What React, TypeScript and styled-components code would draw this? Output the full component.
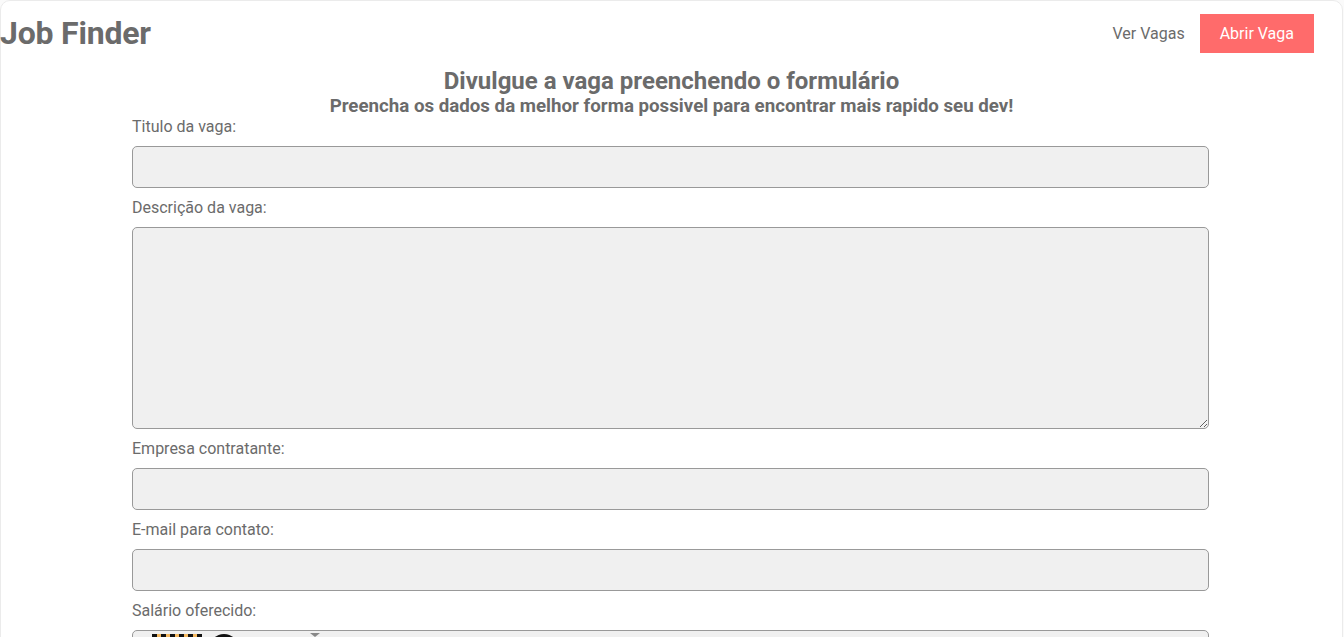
import React from "react";
import styled, { createGlobalStyle } from "styled-components";

const GlobalStyle = createGlobalStyle`
  * { box-sizing: border-box; }
  html, body { margin: 0; padding: 0; background: #fafafa; }
  body { font-family: Roboto, "Liberation Sans", Arial, sans-serif; color: #6b6b6b; }
`;

const Page = styled.div`
  width: 1343px;
  background: #ffffff;
  border: 1px solid #ebebeb;
  border-radius: 10px;
  min-height: 900px;
`;

const Header = styled.header`
  display: flex;
  align-items: center;
  justify-content: space-between;
  padding: 13px 28px 14px 0;
`;

const Logo = styled.h1`
  margin: 0 0 0 -1px;
  font-size: 32px;
  font-weight: 700;
  color: #6b6b6b;
  line-height: 37.5px;
  letter-spacing: -0.2px;
`;

const Nav = styled.nav`
  display: flex;
  align-items: center;
  gap: 15px;
`;

const NavLink = styled.a<{ $primary?: boolean }>`
  font-size: 16px;
  line-height: 19px;
  text-decoration: none;
  cursor: pointer;
  color: ${(p) => (p.$primary ? "#ffffff" : "#6b6b6b")};
  background: ${(p) => (p.$primary ? "#ff6b6b" : "transparent")};
  padding: ${(p) => (p.$primary ? "10px 20px" : "0")};
`;

const Intro = styled.section`
  text-align: center;
`;

const Title = styled.h2`
  margin: 0;
  font-size: 24px;
  line-height: 28px;
  font-weight: 700;
  color: #6b6b6b;
`;

const Subtitle = styled.h3`
  margin: 0;
  font-size: 18.72px;
  line-height: 22px;
  font-weight: 700;
  color: #6b6b6b;
`;

const Form = styled.form`
  width: 1077px;
  margin: 0 0 0 131px;
  display: flex;
  flex-direction: column;
`;

const Label = styled.label`
  font-size: 16px;
  line-height: 19px;
  color: #6b6b6b;
  margin-bottom: 10px;
`;

const Field = styled.div`
  position: relative;
  margin-bottom: 10px;
`;

const Input = styled.input`
  display: block;
  width: 100%;
  height: 42px;
  background: #f0f0f0;
  border: 1px solid #999999;
  border-radius: 5px;
  padding: 0 10px;
  font-family: inherit;
  font-size: 16px;
  color: #555;
  outline: none;
`;

const TextArea = styled.textarea`
  display: block;
  width: 100%;
  height: 202px;
  background: #f0f0f0;
  border: 1px solid #999999;
  border-radius: 5px;
  padding: 10px;
  font-family: inherit;
  font-size: 16px;
  color: #555;
  outline: none;
`;

const Bleed = styled.svg`
  position: absolute;
  left: 20px;
  top: 2px;
  pointer-events: none;
`;

const Submit = styled.button`
  align-self: flex-start;
  margin-top: 10px;
  background: #ff6b6b;
  color: #fff;
  border: none;
  padding: 10px 20px;
  font-family: inherit;
  font-size: 16px;
`;

export default function App() {
  return (
    <>
      <GlobalStyle />
      <Page>
        <Header>
          <Logo>Job Finder</Logo>
          <Nav>
            <NavLink>Ver Vagas</NavLink>
            <NavLink $primary>Abrir Vaga</NavLink>
          </Nav>
        </Header>
        <Intro>
          <Title>Divulgue a vaga preenchendo o formulário</Title>
          <Subtitle>Preencha os dados da melhor forma possivel para encontrar mais rapido seu dev!</Subtitle>
        </Intro>
        <Form onSubmit={(e) => e.preventDefault()}>
          <Label htmlFor="title">Titulo da vaga:</Label>
          <Field>
            <Input id="title" type="text" />
          </Field>
          <Label htmlFor="description">Descrição da vaga:</Label>
          <Field>
            <TextArea id="description" />
          </Field>
          <Label htmlFor="company">Empresa contratante:</Label>
          <Field>
            <Input id="company" type="text" />
          </Field>
          <Label htmlFor="email">E-mail para contato:</Label>
          <Field>
            <Input id="email" type="email" />
          </Field>
          <Label htmlFor="salary">Salário oferecido:</Label>
          <Field>
            <Input id="salary" type="text" />
            <Bleed width="200" height="14" viewBox="0 0 200 14">
              <rect x="0" y="2" width="5" height="12" fill="#111" />
              <rect x="5" y="2" width="4" height="12" fill="#f4b860" />
              <rect x="9" y="2" width="5" height="12" fill="#111" />
              <rect x="14" y="2" width="4" height="12" fill="#f4b860" />
              <rect x="18" y="2" width="5" height="12" fill="#111" />
              <rect x="23" y="2" width="4" height="12" fill="#f4b860" />
              <rect x="27" y="2" width="5" height="12" fill="#111" />
              <rect x="32" y="2" width="4" height="12" fill="#f4b860" />
              <rect x="36" y="2" width="5" height="12" fill="#111" />
              <rect x="41" y="2" width="4" height="12" fill="#f4b860" />
              <rect x="45" y="2" width="5" height="12" fill="#111" />
              <circle cx="72" cy="16" r="14" fill="#111" />
              <circle cx="72" cy="16" r="9" fill="#4fb08a" />
              <path d="M158 1 L168 1 L163 5 Z" fill="#888" />
            </Bleed>
          </Field>
          <Submit type="submit">Criar vaga</Submit>
        </Form>
      </Page>
    </>
  );
}
